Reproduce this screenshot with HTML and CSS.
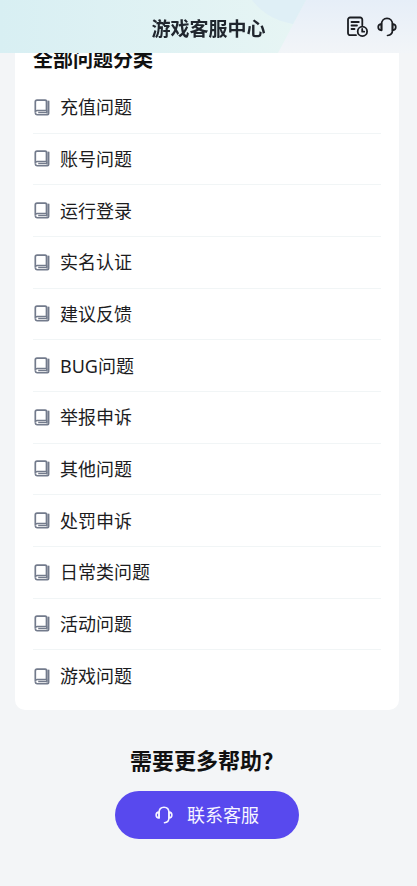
FILE: index.html
```html
<!DOCTYPE html>
<html lang="zh-CN">
<head>
<meta charset="utf-8">
<meta name="viewport" content="width=device-width, initial-scale=1">
<title>游戏客服中心</title>
<link rel="stylesheet" href="styles.css">
</head>
<body>
<svg class="defs" width="0" height="0" aria-hidden="true">
  <symbol id="book" viewBox="0 0 16 17">
    <path d="M12.800 1.500h1.700v13.500q0 .6-.6.600h-1.500z" fill="currentColor" opacity=".55"/>
    <path d="M3 1.200h8.200q1.300 0 1.300 1.300v9H3.300q-2 0-2 2V3q0-1.800 1.700-1.800z" fill="none" stroke="currentColor" stroke-width="1.700"/>
    <path d="M1.300 13.500q0 2.200 2 2.200h10.200q1.200 0 1.200-1.200V1.800M4.200 13.600h8.600v-2" fill="none" stroke="currentColor" stroke-width="1.500"/>
  </symbol>
  <symbol id="headset" viewBox="0 0 20 20">
    <g fill="none" stroke="currentColor" stroke-linecap="round" stroke-linejoin="round">
      <path d="M4.500 13V7.500C4.500 3.800 6.700 1.300 10 1.300s5.500 2.500 5.500 6.200V13c0 3.200-1.700 5.300-5 5.500"/>
      <path d="M4.500 6.800C2.300 7 1.200 8.300 1.200 10s1.100 3.200 3.300 3.400zM15.500 6.800c2.200.2 3.300 1.500 3.300 3.200s-1.100 3.200-3.300 3.400z"/>
    </g>
  </symbol>
</svg>

<header class="topbar">
  <svg class="topbar-art" viewBox="0 0 417 53" preserveAspectRatio="none" aria-hidden="true">
    <defs>
      <linearGradient id="mint" x1="0" y1="0" x2="1" y2="0">
        <stop offset="0" stop-color="#d8eff3"/>
        <stop offset="1" stop-color="#e7f5f4"/>
      </linearGradient>
      <linearGradient id="mist" x1="0" y1="0" x2="0" y2="1">
        <stop offset="0" stop-color="#e6eef8"/>
        <stop offset="1" stop-color="#f2f5f8"/>
      </linearGradient>
    </defs>
    <path d="M0 0h417v53H0z" fill="url(#mist)"/>
    <path d="M0 0h306l-28 53H0z" fill="url(#mint)"/>
    <path d="M252 0h54l-13 24c-18-3-32-12-41-24z" fill="#dfeff6"/>
  </svg>
  <h1 class="topbar-title">游戏客服中心</h1>
  <nav class="topbar-actions">
    <button class="icon-button" type="button" aria-label="服务记录">
      <svg width="22" height="22" viewBox="0 0 22 22" fill="none" stroke="currentColor" stroke-width="1.800" stroke-linecap="round" stroke-linejoin="round" aria-hidden="true">
        <path d="M9 19.200H3.200A2.200 2.200 0 0 1 1 17V3.700a2.200 2.200 0 0 1 2.200-2.200h9.900a2.200 2.200 0 0 1 2.200 2.200v5.600M4.500 6h7.300M4.500 9.500h5.500M4.500 13h3"/>
        <circle cx="15.400" cy="15.400" r="4.700"/>
        <path d="M15.200 13v2.700h2"/>
      </svg>
    </button>
    <button class="icon-button" type="button" aria-label="联系客服">
      <svg class="headset" width="20" height="20" aria-hidden="true"><use href="#headset"/></svg>
    </button>
  </nav>
</header>

<main class="page">
  <section class="card">
    <h2 class="card-title">全部问题分类</h2>
    <ul class="topics">
      <li><a class="topic" href="#"><svg class="book" aria-hidden="true"><use href="#book"/></svg>充值问题</a></li>
      <li><a class="topic" href="#"><svg class="book" aria-hidden="true"><use href="#book"/></svg>账号问题</a></li>
      <li><a class="topic" href="#"><svg class="book" aria-hidden="true"><use href="#book"/></svg>运行登录</a></li>
      <li><a class="topic" href="#"><svg class="book" aria-hidden="true"><use href="#book"/></svg>实名认证</a></li>
      <li><a class="topic" href="#"><svg class="book" aria-hidden="true"><use href="#book"/></svg>建议反馈</a></li>
      <li><a class="topic" href="#"><svg class="book" aria-hidden="true"><use href="#book"/></svg>BUG问题</a></li>
      <li><a class="topic" href="#"><svg class="book" aria-hidden="true"><use href="#book"/></svg>举报申诉</a></li>
      <li><a class="topic" href="#"><svg class="book" aria-hidden="true"><use href="#book"/></svg>其他问题</a></li>
      <li><a class="topic" href="#"><svg class="book" aria-hidden="true"><use href="#book"/></svg>处罚申诉</a></li>
      <li><a class="topic" href="#"><svg class="book" aria-hidden="true"><use href="#book"/></svg>日常类问题</a></li>
      <li><a class="topic" href="#"><svg class="book" aria-hidden="true"><use href="#book"/></svg>活动问题</a></li>
      <li><a class="topic" href="#"><svg class="book" aria-hidden="true"><use href="#book"/></svg>游戏问题</a></li>
    </ul>
  </section>

  <section class="help">
    <h2 class="help-title">需要更多帮助？</h2>
    <button class="contact" type="button">
      <svg class="headset" width="18" height="18" aria-hidden="true"><use href="#headset"/></svg>
      联系客服
    </button>
  </section>
</main>
</body>
</html>
```

FILE: styles.css
```css
* {
  box-sizing: border-box;
}

body {
  margin: 0;
  background: #f3f5f7;
  color: #1c1c1e;
  font-family: "Noto Sans", "Noto Sans CJK SC", sans-serif;
}

h1,
h2,
ul {
  margin: 0;
  padding: 0;
}

button {
  border: 0;
  font: inherit;
  cursor: pointer;
}

.defs {
  position: absolute;
}

/* Fixed bar; the list scrolls beneath it */
.topbar {
  position: fixed;
  inset: 0 0 auto;
  z-index: 1;
  display: grid;
  grid-template-columns: 1fr auto 1fr;
  align-items: center;
  height: 53px;
  padding: 0 20px;
  overflow: hidden;
}

.topbar-art {
  position: absolute;
  inset: 0;
  z-index: -1;
  width: 100%;
  height: 100%;
}

.topbar-title {
  grid-column: 2;
  padding-top: 4px;
  color: #20262e;
  font-size: 19px;
  line-height: 28px;
}

.topbar-actions {
  display: flex;
  justify-content: flex-end;
  align-items: center;
  gap: 8px;
}

.icon-button {
  display: flex;
  padding: 0;
  background: none;
  color: #1b1d22;
}

.headset {
  stroke-width: 1.7;
}

.page {
  padding: 0 18px 48px 15px;
}

.card {
  padding: 46px 18px 8px;
  border-radius: 0 0 10px 10px;
  background: #fff;
}

.card-title {
  margin-bottom: 8px;
  color: #111;
  font-size: 20px;
  line-height: 28px;
}

.topics {
  display: grid;
  grid-auto-rows: 1fr;
  min-height: 620px;
  list-style: none;
}

.topics li {
  display: flex;
  border-bottom: 1px solid #f1f5f6;
}

.topics li:last-child {
  border-bottom: 0;
}

.topic {
  flex: 1;
  display: flex;
  align-items: center;
  gap: 10px;
  padding-left: 1px;
  color: inherit;
  font-size: 18px;
  line-height: 26px;
  text-decoration: none;
}

.book {
  width: 16px;
  height: 17px;
  color: #737b8c;
}

.help {
  display: flex;
  flex-direction: column;
  align-items: center;
  gap: 15px;
  padding-top: 34px;
}

.help-title {
  color: #111;
  font-size: 22px;
  line-height: 32px;
}

.contact {
  display: flex;
  align-items: center;
  justify-content: center;
  gap: 14px;
  width: 184px;
  height: 48px;
  border-radius: 24px;
  background: #5849ee;
  color: #f6f5ff;
  font-size: 18px;
  line-height: 26px;
}
```
